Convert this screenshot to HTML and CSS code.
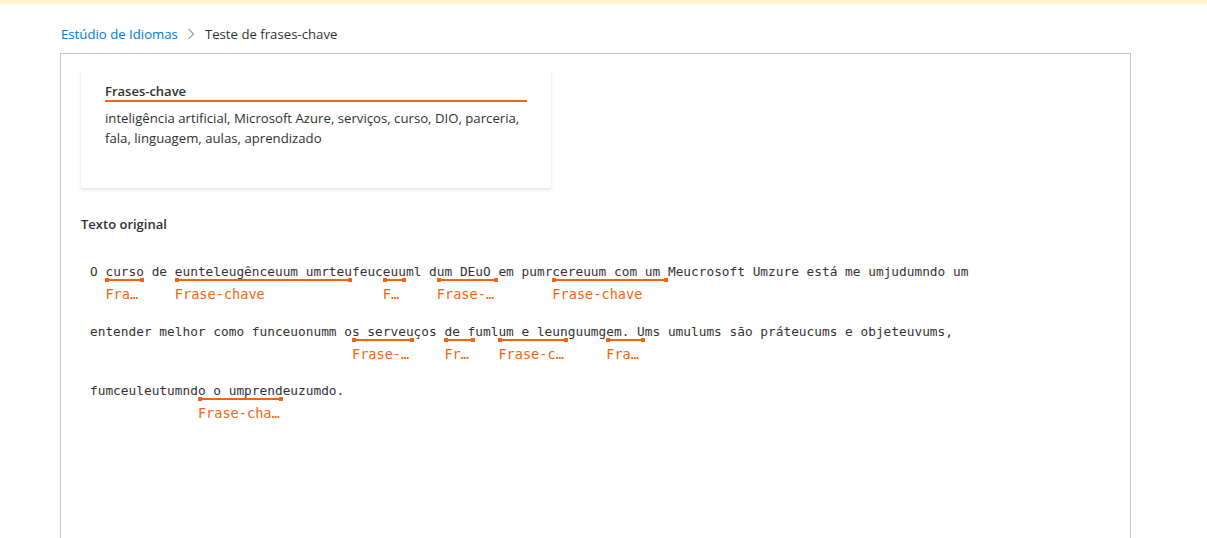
FILE: index.html
```html
<!DOCTYPE html>
<html lang="pt">
<head>
<meta charset="utf-8">
<title>Teste de frases-chave</title>
<link rel="stylesheet" href="styles.css">
</head>
<body>
<div class="topbar"></div>
<nav class="breadcrumb">
  <a class="crumb-link">Estúdio de Idiomas</a>
  <svg class="chev" width="8" height="12" viewBox="0 0 8 12"><polyline points="1.5,1 6.5,6 1.5,11" fill="none" stroke="#605e5c" stroke-width="1"/></svg>
  <span class="crumb-current">Teste de frases-chave</span>
</nav>
<main class="panel">
  <section class="card">
    <div class="card-title">Frases-chave</div>
    <p class="card-body">inteligência artificial, Microsoft Azure, serviços, curso, DIO, parceria, fala, linguagem, aulas, aprendizado</p>
  </section>
  <h2 class="section-title">Texto original</h2>
  <div class="mono">
    <div class="line">O <span class="kp">curso<span class="kp-label">Frase-chave</span></span> de <span class="kp">eunteleugênceuum umrteu<span class="kp-label">Frase-chave</span></span>feuc<span class="kp">euu<span class="kp-label">Frase-chave</span></span>ml d<span class="kp">um DEuO <span class="kp-label">Frase-chave</span></span>em pumr<span class="kp">cereuum com um <span class="kp-label">Frase-chave</span></span>Meucrosoft Umzure está me umjudumndo um</div>
    <div class="line">entender melhor como funceuonumm o<span class="kp">s serveu<span class="kp-label">Frase-chave</span></span>ços <span class="kp">de f<span class="kp-label">Frase-chave</span></span>uml<span class="kp">um e leun<span class="kp-label">Frase-chave</span></span>guumg<span class="kp">em. U<span class="kp-label">Frase-chave</span></span>ms umulums são práteucums e objeteuvums,</div>
    <div class="line">fumceuleutumnd<span class="kp">o o umprend<span class="kp-label">Frase-chave</span></span>euzumdo.</div>
  </div>
</main>
</body>
</html>
```

FILE: styles.css
```css
html, body {
  margin: 0;
  padding: 0;
  background: #ffffff;
}
body {
  font-family: "Open Sans", "Noto Sans", sans-serif;
  color: #323130;
  overflow: hidden;
}
.topbar {
  height: 4px;
  background: #fff4ce;
}
.breadcrumb {
  display: flex;
  align-items: center;
  padding: 20px 0 0 61px;
  height: 20px;
  font-size: 13.2px;
  line-height: 20px;
}
.crumb-link {
  color: #0078d4;
}
.chev {
  margin: 0 10px 0 9px;
}
.crumb-current {
  color: #323130;
}
.panel {
  margin: 9px 0 0 60px;
  min-height: 520px;
  border: 1px solid #c8c6c4;
  padding: 15px 20px 0 20px;
  box-sizing: content-box;
  width: 1029px;
}
.card {
  width: 470px;
  height: 119px;
  box-sizing: border-box;
  padding: 13px 24px 0 24px;
  background: #fff;
  box-shadow: 0 1.6px 3.6px rgba(0,0,0,0.13), 0 0.3px 0.9px rgba(0,0,0,0.11);
}
.card-title {
  font-size: 13px;
  font-weight: 600;
  line-height: 18px;
  border-bottom: 2px solid #f7630c;
}
.card-body {
  margin: 6px 0 0 0;
  font-size: 13.2px;
  line-height: 20px;
}
.section-title {
  margin: 26px 0 0 0;
  font-size: 13px;
  font-weight: 600;
  line-height: 20px;
}
.mono {
  margin-top: 28px;
  padding-left: 9px;
  font-family: "DejaVu Sans Mono", monospace;
  font-size: 12.8px;
  color: #333333;
}
.line {
  height: 59.5px;
  line-height: 20px;
  white-space: pre;
}
.kp {
  display: inline-block;
  position: relative;
  line-height: 20px;
}
.kp::before {
  content: "";
  position: absolute;
  left: 0;
  right: 0;
  top: 16px;
  height: 4px;
  background:
    linear-gradient(#f7630c, #f7630c) left center / 4px 4px no-repeat,
    linear-gradient(#f7630c, #f7630c) right center / 4px 4px no-repeat,
    linear-gradient(#f7630c, #f7630c) center center / 100% 2px no-repeat;
}
.kp-label {
  position: absolute;
  left: 0;
  top: 23px;
  width: 100%;
  font-size: 13.6px;
  line-height: 18px;
  color: #f7630c;
  white-space: nowrap;
  overflow: hidden;
  text-overflow: ellipsis;
}
```
